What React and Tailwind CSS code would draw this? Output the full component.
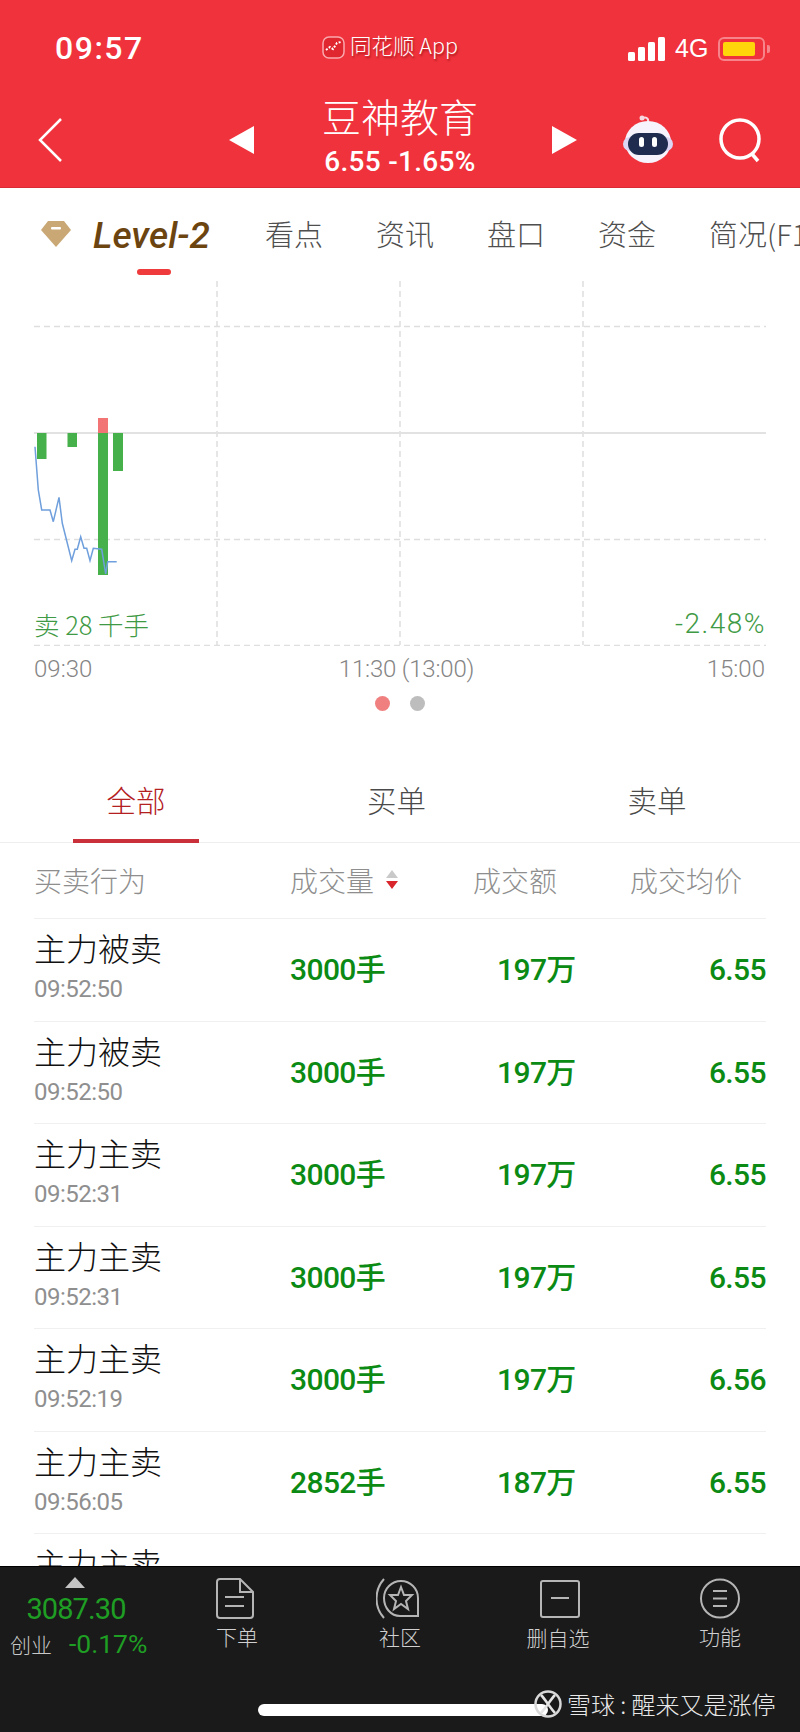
import React from "react";

const CJK = { fontFamily: '"Noto Sans CJK SC", sans-serif' };

const rows = [
  ["主力被卖", "09:52:50", "3000手", "197万", "6.55"],
  ["主力被卖", "09:52:50", "3000手", "197万", "6.55"],
  ["主力主卖", "09:52:31", "3000手", "197万", "6.55"],
  ["主力主卖", "09:52:31", "3000手", "197万", "6.55"],
  ["主力主卖", "09:52:19", "3000手", "197万", "6.56"],
  ["主力主卖", "09:56:05", "2852手", "187万", "6.55"],
  ["主力主卖", "09:56:05", "2852手", "187万", "6.55"],
];

function Row({ row }) {
  return (
    <div className="flex h-[102.5px] shrink-0 items-center border-b border-[#f0f0f0]">
      <div className="w-[256px] pb-[8px]">
        <div className="text-[32px] leading-[40px] font-light text-[#111111]">{row[0]}</div>
        <div className="text-[24px] leading-[30px] mt-[7px] font-['Roboto',sans-serif] text-[#8f8f8f] tracking-[-0.5px]">{row[1]}</div>
      </div>
      <div className="w-[207px] whitespace-nowrap text-[30px] font-medium text-[#0b8a14] tracking-[-0.6px] font-['Roboto','Noto_Sans_CJK_SC',sans-serif]">{row[2]}</div>
      <div className="w-[100px] whitespace-nowrap text-[30px] font-medium text-[#0b8a14] tracking-[-0.6px] font-['Roboto','Noto_Sans_CJK_SC',sans-serif]">{row[3]}</div>
      <div className="flex-1 text-right text-[30px] font-medium text-[#0b8a14] tracking-[-0.6px] font-['Roboto',sans-serif]">{row[4]}</div>
    </div>
  );
}

function Robot() {
  return (
    <svg width="54" height="52" viewBox="0 0 54 52">
      <path d="M21 6 C24 3 28 5 27 9" fill="none" stroke="#f8dbe2" strokeWidth="2" />
      <circle cx="21" cy="5" r="2.5" fill="#f8d8e0" />
      <ellipse cx="27" cy="29" rx="23" ry="21" fill="#f6f3fc" />
      <rect x="2" y="24" width="50" height="14" rx="7" fill="#dcd6f4" />
      <rect x="7" y="20" width="40" height="22" rx="11" fill="#1f2c50" />
      <rect x="18" y="24" width="5" height="10" rx="2.5" fill="#fff" />
      <rect x="31" y="24" width="5" height="10" rx="2.5" fill="#fff" />
    </svg>
  );
}

function Header() {
  return (
    <div className="h-[188px] shrink-0 bg-[#f0323c] relative text-white border-b border-[#d92b34]">
      {/* status bar */}
      <div className="flex items-center h-[96px] pt-[1px]">
        <div className="ml-[55px] mt-[-2px] w-[267px] text-[32px] font-medium tracking-[1.5px] font-['Roboto',sans-serif]">09:57</div>
        <svg width="23" height="23" viewBox="0 0 23 23" className="mt-[-3px]">
          <rect x="1" y="1" width="21" height="21" rx="6" fill="#e0262e" stroke="#f9a9ad" strokeWidth="1.5" />
          <path d="M4 14 L8 11 L11 13 L15 7 L19 6" fill="none" stroke="#fff" strokeWidth="2" strokeDasharray="2 1.5" />
        </svg>
        <div className="ml-[5px] mt-[-6px] w-[278px] text-[21.5px] font-light [text-shadow:1px_2px_2px_rgba(100,0,0,0.5)]" style={CJK}>
          同花顺 App
        </div>
        <div className="flex items-end gap-[3px] h-[24px]">
          <span className="w-[7px] h-[9px] rounded-[1.5px] bg-white" />
          <span className="w-[7px] h-[14px] rounded-[1.5px] bg-white" />
          <span className="w-[7px] h-[19px] rounded-[1.5px] bg-white" />
          <span className="w-[7px] h-[24px] rounded-[1.5px] bg-white" />
        </div>
        <div className="ml-[10px] w-[43px] text-[25px] font-['Liberation_Sans',sans-serif]">4G</div>
        <div className="w-[47px] h-[24px] rounded-[6px] border-2 border-white/40 p-[3px]">
          <div className="w-[32px] h-full rounded-[2px] bg-[#ffd60a]" />
        </div>
        <div className="ml-[2px] w-[3px] h-[8px] rounded-r-[2px] bg-white/40" />
      </div>

      {/* nav bar */}
      <div className="absolute left-0 top-[96px] w-full h-[90px]">
        <svg className="absolute left-[36px] top-[20px]" width="30" height="48" viewBox="0 0 30 48">
          <path d="M25 3 L4 24 L25 45" fill="none" stroke="#fff" strokeWidth="2.5" />
        </svg>
        <div className="absolute left-[229px] top-[30px] w-0 h-0 border-y-[14px] border-y-transparent border-r-[25px] border-r-white" />
        <div className="absolute left-[552px] top-[30px] w-0 h-0 border-y-[14px] border-y-transparent border-l-[25px] border-l-white" />
        <div className="flex flex-col items-center mt-[-4px]">
          <div className="text-[39px] leading-[46px] font-light" style={CJK}>豆神教育</div>
          <div className="text-[28px] leading-[30px] mt-[9px] font-medium tracking-[0.3px] font-['Roboto',sans-serif]">6.55 -1.65%</div>
        </div>
        <div className="absolute left-[621px] top-[17px]"><Robot /></div>
        <svg className="absolute left-[716px] top-[20px]" width="50" height="48" viewBox="0 0 50 48">
          <circle cx="24" cy="23" r="19" fill="none" stroke="#fff" strokeWidth="3.5" />
          <path d="M36 38 L42 45" stroke="#fff" strokeWidth="3.5" />
        </svg>
      </div>
    </div>
  );
}

function StockTabs() {
  return (
    <div className="relative h-[93px] shrink-0 overflow-hidden flex items-start pt-[27px] pl-[41px] whitespace-nowrap">
      <svg width="30" height="26" viewBox="0 0 30 26" className="shrink-0 mt-[6px]">
        <path d="M7 0 H23 L30 9 L15 26 L0 9 Z" fill="#c9a876" />
        <rect x="10" y="6" width="10" height="2.5" rx="1" fill="#fff" />
      </svg>
      <div className="ml-[22px] w-[122px] shrink-0 mt-[5px] text-[37px] leading-[32px] font-medium italic text-[#6b4410] font-['Roboto',sans-serif]">Level-2</div>
      <div className="flex gap-[53px] ml-[50px] text-[29px] leading-[36px] font-light text-[#4f4f4f]">
        <span>看点</span>
        <span>资讯</span>
        <span>盘口</span>
        <span>资金</span>
        <span>简况(F10</span>
      </div>
      <div className="absolute left-[137px] top-[81px] w-[34px] h-[6px] rounded-full bg-[#ef3b3b]" />
    </div>
  );
}

function Chart() {
  return (
    <div className="relative h-[365px] shrink-0">
      <svg width="800" height="365" viewBox="0 281 800 365" className="block">
        <g stroke="#dedede" strokeWidth="1.5" strokeDasharray="6 4" fill="none">
          <path d="M217 281 V645 M400 281 V645 M583 281 V645" />
          <path d="M34 326.5 H766 M34 539.5 H766 M34 645.5 H766" />
        </g>
        <path d="M34 433 H766" stroke="#e2e2e2" strokeWidth="2" />
        <rect x="37" y="433" width="9.5" height="26" fill="#46b04a" />
        <rect x="67.5" y="433" width="9.5" height="14" fill="#46b04a" />
        <rect x="98" y="418" width="10" height="15" fill="#f27474" />
        <rect x="98" y="433" width="10" height="142" fill="#46b04a" />
        <rect x="113" y="433" width="10" height="38" fill="#46b04a" />
        <polyline
          points="35,446.7 38.3,490 41.7,510 50,510 53.3,521.7 59,497.3 62.3,523.3 71.7,560.7 75,549.3 77.3,549.3 80.7,536.7 84,548.3 86.7,548.3 90,560.7 93.3,548.3 101.7,549.3 105.7,574 107.7,561.7 116.7,561.7"
          fill="none"
          stroke="#6f9fdc"
          strokeWidth="1.5"
        />
      </svg>
      <div className="absolute left-[34px] top-[327px] text-[25.5px] leading-[32px] font-light text-[#3f9a45]">卖 28 千手</div>
      <div className="absolute right-[34px] top-[327px] text-[28px] leading-[32px] tracking-[1.5px] font-['Roboto',sans-serif] font-light text-[#3f9a45]">-2.48%</div>
    </div>
  );
}

function BottomBar() {
  const label = "mt-[3px] text-[21px] leading-[28px] font-light text-[#d0d0d0]";
  return (
    <div className="relative h-[166px] shrink-0 bg-[#1a1a1a] border-t border-black flex items-start">
      <div className="w-[160px] shrink-0 flex flex-col items-center pt-[10px]">
        <div className="w-0 h-0 ml-[-10px] border-x-[10px] border-x-transparent border-b-[11px] border-b-[#c4c4c4]" />
        <div className="ml-[-8px] mt-[3px] text-[29px] leading-[36px] tracking-[-0.9px] font-['Roboto',sans-serif] text-[#1f9e24]">3087.30</div>
        <div className="w-full flex items-center mt-[3px]">
          <span className="ml-[10px] w-[59px] text-[21px] leading-[28px] font-light text-[#c8c8c8]">创业</span>
          <span className="text-[26.5px] leading-[28px] font-['Roboto',sans-serif] text-[#1f9e24]">-0.17%</span>
        </div>
      </div>

      <div className="w-[150px] shrink-0 flex flex-col items-center pt-[11px]">
        <svg width="38" height="41" viewBox="0 0 38 41" fill="none" stroke="#b5b5b5" strokeWidth="2">
          <path d="M4 1 H24 L37 14 V37 Q37 40 34 40 H4 Q1 40 1 37 V4 Q1 1 4 1 Z" />
          <path d="M24 1 V14 H37" />
          <path d="M9 19 H28 M9 28 H28" />
        </svg>
        <div className={`${label} ml-[4px]`}>下单</div>
      </div>
      <div className="w-[180px] shrink-0 flex flex-col items-center pt-[11px]">
        <svg width="44" height="41" viewBox="0 0 44 41" fill="none" stroke="#b5b5b5" strokeWidth="2" className="ml-[-4px]">
          <path d="M8 1 C-2 12 -2 29 8 40" />
          <path d="M8 20 A17 17 0 0 1 42 20 V38 H24 C15 38 8 30 8 20 Z" />
          <path d="M25 9 L28 17 L36 17 L30 23 L32 31 L25 26 L18 31 L20 23 L14 17 L22 17 Z" />
        </svg>
        <div className={label}>社区</div>
      </div>
      <div className="w-[136px] shrink-0 flex flex-col items-center pt-[13px]">
        <svg width="40" height="38" viewBox="0 0 40 38" fill="none" stroke="#b5b5b5" strokeWidth="2" className="ml-[4px]">
          <rect x="1" y="1" width="38" height="36" rx="2" />
          <path d="M11 18 H29" />
        </svg>
        <div className="mt-[5px] text-[21px] leading-[28px] font-light text-[#d0d0d0]">删自选</div>
      </div>
      <div className="w-[188px] shrink-0 flex flex-col items-center pt-[11px]">
        <svg width="40" height="41" viewBox="0 0 40 41" fill="none" stroke="#b5b5b5" strokeWidth="2">
          <circle cx="20" cy="20.5" r="19" />
          <path d="M13 13 H27 M13 20.5 H27 M13 28 H27" />
        </svg>
        <div className={label}>功能</div>
      </div>

      {/* home indicator and watermark */}
      <div className="absolute left-[258px] top-[137px] w-[290px] h-[12px] rounded-full bg-white" />
      <svg className="absolute left-[534px] top-[122px]" width="28" height="30" viewBox="0 0 28 30" fill="none" stroke="#e4e4e4" strokeWidth="2.5">
        <circle cx="14" cy="15" r="12.5" stroke="#d8d8d8" />
        <path d="M7 6 C11 10 17 20 21 24 M21 6 C17 10 11 20 7 24" />
      </svg>
      <div className="absolute left-[567px] top-[121px] text-[24px] leading-[32px] font-light text-[#e8e8e8] whitespace-nowrap">雪球 : 醒来又是涨停</div>
    </div>
  );
}

export default function App() {
  return (
    <div className="w-[800px] h-[1732px] flex flex-col overflow-hidden bg-white" style={CJK}>
      <Header />
      <StockTabs />
      <Chart />

      {/* time axis */}
      <div className="flex justify-between h-[44px] shrink-0 pl-[34px] pr-[35px] pt-[7px] text-[24px] leading-[32px] font-light text-[#858585] font-['Roboto',sans-serif]">
        <span>09:30</span>
        <span className="ml-[14px] tracking-[-0.2px]">11:30 (13:00)</span>
        <span>15:00</span>
      </div>
      <div className="flex justify-center gap-[20px] h-[42px] shrink-0 pt-[6px]">
        <span className="w-[15px] h-[15px] rounded-full bg-[#f08080]" />
        <span className="w-[15px] h-[15px] rounded-full bg-[#bdbdbd]" />
      </div>

      {/* buy and sell tabs */}
      <div className="flex h-[111px] shrink-0 px-[6px] border-b border-[#eeeeee] text-[29.5px] font-light text-[#4a4a4a]">
        <div className="relative w-[260px] flex justify-center pt-[47px] leading-[40px] text-[#b3201f]">
          全部
          <div className="absolute left-[67px] bottom-[-1px] w-[126px] h-[4px] bg-[#c9303a]" />
        </div>
        <div className="w-[261px] flex justify-center pt-[47px] leading-[40px]">买单</div>
        <div className="w-[260px] flex justify-center pt-[47px] leading-[40px]">卖单</div>
      </div>

      {/* trade list */}
      <div className="flex-1 min-h-0 overflow-hidden px-[34px]">
        <div className="flex items-center h-[76px] pb-[2px] border-b border-[#f0f0f0] text-[28px] font-light text-[#8e8e8e]">
          <div className="w-[256px]">买卖行为</div>
          <div className="w-[183px] flex items-center gap-[12px]">
            成交量
            <div className="flex flex-col gap-[3px]">
              <span className="w-0 h-0 border-x-[6px] border-x-transparent border-b-[8px] border-b-[#c9c9c9]" />
              <span className="w-0 h-0 border-x-[6px] border-x-transparent border-t-[8px] border-t-[#d8262c]" />
            </div>
          </div>
          <div className="w-[157px]">成交额</div>
          <div>成交均价</div>
        </div>
        {rows.map((row, i) => (
          <Row key={i} row={row} />
        ))}
      </div>

      <BottomBar />
    </div>
  );
}
